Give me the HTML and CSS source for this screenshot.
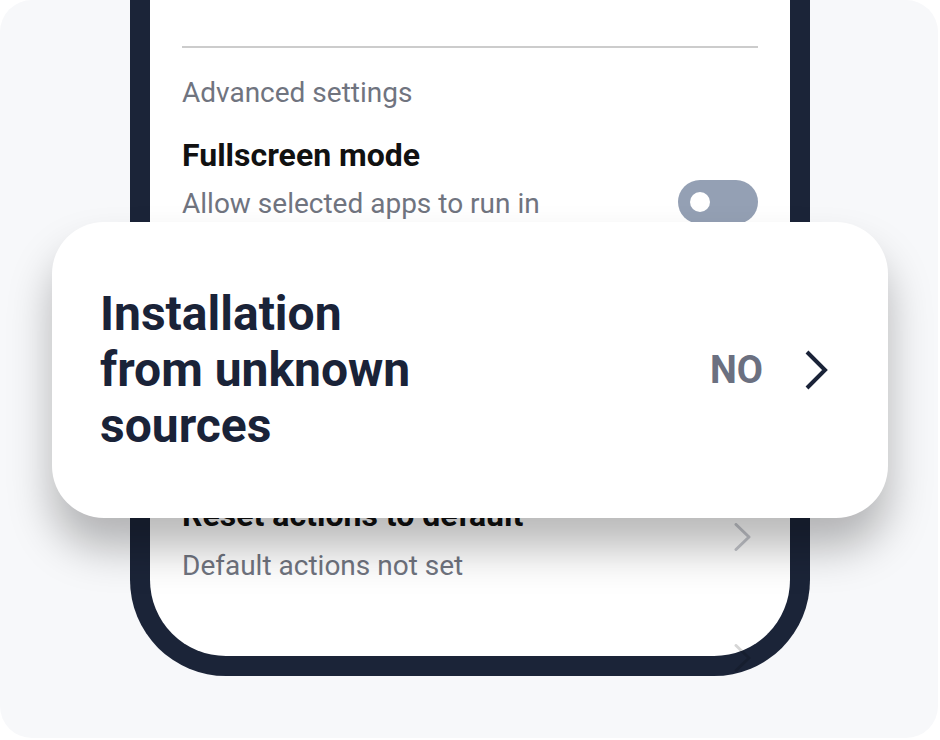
FILE: index.html
```html
<!DOCTYPE html>
<html lang="en">
<head>
<meta charset="utf-8">
<title>Advanced settings</title>
<link rel="stylesheet" href="styles.css">
</head>
<body>
<div class="canvas">
  <div class="phone">
    <div class="screen">
      <div class="divider"></div>
      <div class="section-title">Advanced settings</div>
      <div class="row first">
        <div class="row-text">
          <div class="row-title">Fullscreen mode</div>
          <div class="row-sub">Allow selected apps to run in</div>
        </div>
        <span class="toggle"><span class="knob"></span></span>
      </div>
      <div class="row reset">
        <div class="row-text">
          <div class="row-title">Reset actions to default</div>
          <div class="row-sub">Default actions not set</div>
        </div>
        <svg class="chev" viewBox="0 0 24 28"><path d="M2 1.5 L15 14 L2 26.5"/></svg>
      </div>
      <div class="row tail">
        <svg class="chev ghost" viewBox="0 0 24 28"><path d="M2 1.5 L15 14 L2 26.5"/></svg>
      </div>
    </div>
  </div>
  <div class="card">
    <div class="card-title">Installation from unknown sources</div>
    <div class="card-value">
      <span class="card-no">NO</span>
      <svg class="card-chev" viewBox="0 0 24 40"><path d="M3 2 L21 20 L3 38"/></svg>
    </div>
  </div>
</div>
</body>
</html>
```
FILE: styles.css
```css
body {
  margin: 0;
  background: #ffffff;
  font-family: Roboto, "Liberation Sans", sans-serif;
}

.canvas {
  position: relative;
  width: 938px;
  height: 738px;
  background: #f7f8fa;
  border-radius: 32px;
  overflow: hidden;
}

.phone {
  box-sizing: border-box;
  width: 680px;
  height: 676px;
  margin-left: 130px;
  background: #ffffff;
  border: 20px solid #1b2438;
  border-top: 0;
  border-radius: 0 0 96px 96px;
}

.screen {
  display: flex;
  flex-direction: column;
  padding: 46px 32px 0;
}

.divider {
  height: 2px;
  background: #cccccc;
}

.section-title {
  margin-top: 27px;
  font-size: 28px;
  line-height: 36px;
  color: #70747f;
}

.row {
  display: flex;
  align-items: center;
  justify-content: space-between;
  gap: 40px;
}

.row.first {
  margin-top: 24px;
  height: 123px;
  align-items: flex-start;
}

.row-text {
  flex: 1;
  min-width: 0;
}

.row-title {
  font-size: 32px;
  line-height: 40px;
  font-weight: 700;
  color: #111111;
}

.row-sub {
  margin-top: 11px;
  font-size: 28px;
  line-height: 36px;
  color: #70747f;
}

.row.reset {
  margin-top: 237px;
}

.row.reset .row-sub {
  margin-top: 13px;
}

.toggle {
  flex: none;
  box-sizing: border-box;
  display: flex;
  align-items: center;
  width: 80px;
  height: 44px;
  margin-top: 45px;
  padding-left: 12px;
  border-radius: 22px;
  background: #94a0b4;
}

.knob {
  width: 20px;
  height: 20px;
  border-radius: 50%;
  background: #ffffff;
}

.chev {
  flex: none;
  width: 24px;
  height: 28px;
  margin-bottom: 6px;
}

.chev path {
  fill: none;
  stroke: #c6c8ce;
  stroke-width: 3;
  stroke-linecap: round;
  stroke-linejoin: round;
}

.row.tail {
  justify-content: flex-end;
  margin-top: 60px;
}

.chev.ghost path {
  stroke: rgba(0, 0, 0, 0.16);
}

.card {
  position: absolute;
  left: 52px;
  top: 222px;
  box-sizing: border-box;
  width: 836px;
  height: 296px;
  display: flex;
  align-items: center;
  justify-content: space-between;
  padding: 0 60px 0 48px;
  background: #ffffff;
  border-radius: 52px;
  box-shadow: 0 30px 44px rgba(0, 0, 0, 0.28);
}

.card-title {
  width: 330px;
  font-size: 48px;
  line-height: 56px;
  font-weight: 700;
  color: #1a2338;
}

.card-value {
  display: flex;
  align-items: center;
  gap: 41px;
}

.card-no {
  font-size: 38px;
  font-weight: 700;
  color: #6b7080;
}

.card-chev {
  width: 24px;
  height: 40px;
}

.card-chev path {
  fill: none;
  stroke: #1a2338;
  stroke-width: 4;
  stroke-linecap: butt;
  stroke-linejoin: miter;
}
```
